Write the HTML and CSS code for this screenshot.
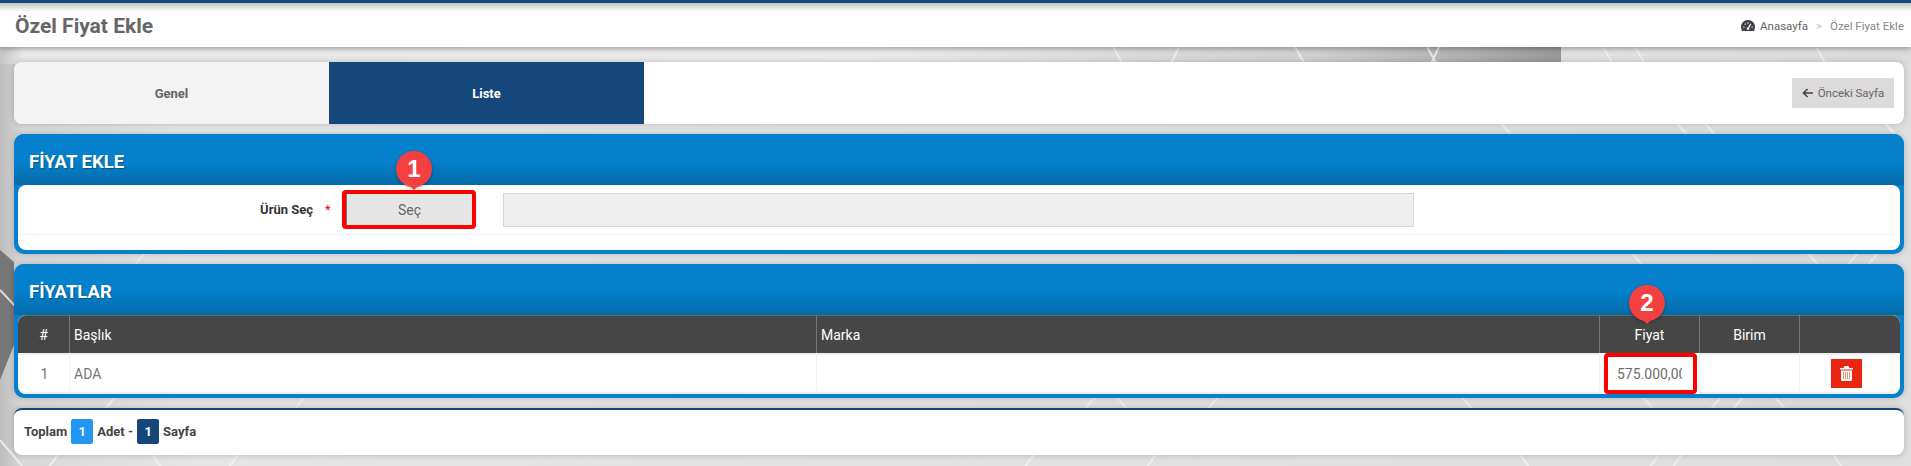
FILE: index.html
```html
<!DOCTYPE html>
<html lang="en">
<head>
  <meta charset="UTF-8">
  <meta name="viewport" content="width=device-width, initial-scale=1.0">
  <title>Özel Fiyat Ekle</title>
  <link rel="stylesheet" href="styles.css">
</head>
<body>
  <header class="topbar">
    <h1 class="page-title">Özel Fiyat Ekle</h1>
    <div class="breadcrumb">
      <svg class="gauge-icon" viewBox="0 0 14 11" width="14" height="11">
        <path fill="#3f3f46" d="M7 0C3.1 0 0 3.1 0 7c0 1.5.4 2.8 1.2 4h11.6c.8-1.200 1.200-2.500 1.200-4 0-3.900-3.100-7-7-7z"/>
        <path fill="none" stroke="#fff" stroke-width="1.300" d="M2.300 7.200h1.200M3.800 3.700l.8.8M7 2.200v1.200M11.700 7.200h-1.200M7 8.800 9.700 3.800"/>
        <circle cx="7" cy="8.800" r="1.300" fill="#fff"/>
      </svg>
      <a class="crumb-home">Anasayfa</a>
      <span class="crumb-sep">&gt;</span>
      <span class="crumb-current">Özel Fiyat Ekle</span>
    </div>
  </header>

  <main class="content">
    <nav class="tabs">
      <a class="tab">Genel</a>
      <a class="tab tab-active">Liste</a>
      <button class="back-button">
        <svg viewBox="0 0 11 10" width="11" height="10"><path fill="none" stroke="#444" stroke-width="1.600" d="M5.500 1 1.500 5l4 4M1.500 5H11"/></svg>
        Önceki Sayfa
      </button>
    </nav>

    <section class="panel">
      <h2 class="panel-title">FİYAT EKLE</h2>
      <div class="panel-body form-body">
        <div class="form-row">
          <label class="form-label">Ürün Seç</label>
          <span class="required">*</span>
          <div class="mark-frame select-frame">
            <span class="callout callout-one">1</span>
            <button class="select-button">Seç</button>
          </div>
          <div class="product-input"></div>
        </div>
      </div>
    </section>

    <section class="panel">
      <h2 class="panel-title">FİYATLAR</h2>
      <div class="panel-body">
        <table class="price-table">
          <thead>
            <tr>
              <th class="col-num">#</th>
              <th class="col-title text-left">Başlık</th>
              <th class="col-brand text-left">Marka</th>
              <th class="col-small">Fiyat</th>
              <th class="col-small">Birim</th>
              <th class="col-last"></th>
            </tr>
          </thead>
          <tbody>
            <tr>
              <td>1</td>
              <td class="text-left">ADA</td>
              <td></td>
              <td class="frame-cell">
                <div class="mark-frame price-frame">
                  <span class="callout callout-two">2</span>
                  <span class="price-value">575.000,00</span>
                </div>
              </td>
              <td></td>
              <td>
                <button class="delete-button">
                  <svg viewBox="0 0 13 15" width="13" height="15">
                    <path fill="#fff" d="M4.500 0h4l1 2H13v1.500H0V2h3.500z"/>
                    <path fill="#fff" d="M1 4.500h11V13.500c0 .8-.6 1.500-1.400 1.500H2.400C1.600 15 1 14.300 1 13.500z"/>
                    <path stroke="#e8935f" stroke-width="1" d="M3.500 6v7M5.500 6v7M7.500 6v7M9.500 6v7"/>
                  </svg>
                </button>
              </td>
            </tr>
          </tbody>
        </table>
      </div>
    </section>

    <footer class="summary">
      <span>Toplam</span>
      <span class="count count-total">1</span>
      <span>Adet -</span>
      <span class="count count-pages">1</span>
      <span>Sayfa</span>
    </footer>
  </main>
</body>
</html>
```

FILE: styles.css
```css
* {
  box-sizing: border-box;
}
html, body {
  height: 100%;
}
body {
  margin: 0;
  overflow: hidden;
  font-family: Roboto, "Liberation Sans", sans-serif;
  background-color: #e6e6e6;
  background-image: url("data:image/svg+xml,%3Csvg xmlns='http://www.w3.org/2000/svg' width='1911' height='466'%3E%3Cdefs%3E%3ClinearGradient id='a' x1='0' x2='1' y1='0' y2='0'%3E%3Cstop offset='0' stop-color='%23bdbdbd'/%3E%3Cstop offset='.012' stop-color='%23d8d8d8'/%3E%3Cstop offset='.1' stop-color='%23e6e6e6'/%3E%3Cstop offset='1' stop-color='%23dedede'/%3E%3C/linearGradient%3E%3ClinearGradient id='b' x1='0' x2='1' y1='0' y2='0'%3E%3Cstop offset='0' stop-color='%23c4c4c4'/%3E%3Cstop offset='.012' stop-color='%23e8e8e8'/%3E%3Cstop offset='.45' stop-color='%23ebebeb'/%3E%3Cstop offset='.68' stop-color='%23d2d2d2'/%3E%3Cstop offset='.75' stop-color='%23b8b8b8'/%3E%3Cstop offset='.817' stop-color='%23999'/%3E%3Cstop offset='.817' stop-color='%23e2e2e2'/%3E%3Cstop offset='1' stop-color='%23dcdcdc'/%3E%3C/linearGradient%3E%3C/defs%3E%3Crect width='1911' height='466' fill='url(%23a)'/%3E%3Crect y='40' width='1911' height='24' fill='url(%23b)'/%3E%3Cpolygon points='0,250 14,262 14,345 0,380' fill='%23777'/%3E%3Cg stroke='%23f4f4f4' stroke-width='2' opacity='.8'%3E%3Cpath d='M0 290 16 307M0 440 22 466M1112 45 1126 70M1180 45 1168 70M1294 45 1308 70M1426 45 1440 70M1440 45 1428 70M1602 45 1616 70M1634 45 1648 70M1815 45 1829 70M1500 122 1512 136M1676 122 1688 136M1704 122 1716 136M1884 122 1896 136M146 252 134 266M1631 252 1643 266M1807 252 1819 266M1859 252 1847 266M1879 252 1867 266M116 396 104 410M306 396 294 410M1096 396 1084 410M1116 396 1128 410M1219 396 1207 410M1461 396 1473 410M1642 396 1654 410M1722 396 1710 410M1744 396 1732 410M1774 396 1786 410M59 453 47 470M151 453 163 470M239 453 227 470M1035 453 1023 470M1157 453 1145 470M1519 453 1531 470M1660 453 1648 470M1683 453 1671 470M1832 453 1844 470'/%3E%3C/g%3E%3C/svg%3E");
  background-repeat: no-repeat;
}
.topbar {
  display: flex;
  align-items: center;
  justify-content: space-between;
  height: 47px;
  padding: 1px 7px 0 15px;
  background: linear-gradient(#c4c4c4, #fff 9px);
  border-top: 3px solid #16477a;
  box-shadow: 0 2px 5px rgba(0, 0, 0, 0.3);
}
.page-title {
  margin: 0;
  font-size: 21px;
  font-weight: 700;
  color: #666;
}
.breadcrumb {
  display: flex;
  align-items: center;
  font-size: 11.5px;
  color: #666;
}
.crumb-home {
  margin-left: 5px;
}
.crumb-sep {
  margin: 0 8px;
  color: #bbb;
}
.crumb-current {
  color: #888;
}
.content {
  display: flex;
  flex-direction: column;
  gap: 10px;
  padding: 15px 7px 0 14px;
}
.tabs {
  display: flex;
  align-items: center;
  height: 62px;
  background-color: #fff;
  border-radius: 8px;
  overflow: hidden;
  box-shadow: 0 0 6px rgba(0, 0, 0, 0.2);
}
.tab {
  display: flex;
  align-items: center;
  justify-content: center;
  align-self: stretch;
  width: 315px;
  font-size: 13px;
  font-weight: 700;
  color: #666;
  background-color: #f3f3f3;
}
.tab-active {
  color: #fff;
  background-color: #16477a;
}
.back-button {
  display: flex;
  align-items: center;
  justify-content: center;
  gap: 5px;
  width: 102px;
  height: 30px;
  margin-left: auto;
  margin-right: 10px;
  padding: 0;
  border: none;
  font-family: inherit;
  font-size: 11.5px;
  color: #666;
  background-color: #dcdadb;
}
.panel {
  padding: 0 4px 4px;
  background-color: #0480cc;
  border-radius: 10px;
  box-shadow: 0 0 6px rgba(0, 0, 0, 0.2);
}
.panel-title {
  display: flex;
  align-items: center;
  height: 51px;
  margin: 0 -4px;
  padding: 4px 15px 0;
  font-size: 18.5px;
  font-weight: 700;
  color: #fff;
  text-shadow: 1px 1px 1px rgba(0, 0, 0, 0.3);
  background: linear-gradient(#0480cc 55%, #046aa8);
  border-radius: 10px 10px 0 0;
}
.panel-body {
  background-color: #fff;
  border-radius: 8px;
}
.form-body {
  padding-bottom: 15px;
}
.form-row {
  display: flex;
  align-items: center;
  height: 50px;
  border-bottom: 1px solid #f2f2f2;
}
.form-label {
  width: 295px;
  font-size: 13px;
  font-weight: 700;
  text-align: right;
  color: #333;
}
.required {
  width: 6px;
  margin: 0 11px 0 12px;
  font-size: 13px;
  color: #e00;
}
.mark-frame {
  position: relative;
  border: 4px solid #f00;
  border-radius: 4px;
}
.select-frame {
  width: 134px;
  height: 39px;
}
.select-button {
  display: block;
  width: 100%;
  height: 100%;
  border: none;
  border-left: 1px solid #777;
  font-family: inherit;
  font-size: 14px;
  color: #666;
  background-color: #e6e6e6;
}
.product-input {
  width: 911px;
  height: 34px;
  margin-left: 27px;
  background-color: #eee;
  border: 1px solid #d6d6de;
}
.callout {
  position: absolute;
  z-index: 2;
  display: flex;
  align-items: center;
  justify-content: center;
  width: 36px;
  height: 36px;
  font-family: "Liberation Sans", sans-serif;
  font-size: 24px;
  font-weight: 700;
  color: #fff;
  background-color: #f44040;
  border-radius: 50%;
  box-shadow: 0 1px 3px rgba(0, 0, 0, 0.35);
}
.callout::after {
  content: "";
  position: absolute;
  left: 13px;
  bottom: -3px;
  border-top: 5px solid #f44040;
  border-left: 5px solid transparent;
  border-right: 5px solid transparent;
}
.callout-one {
  top: -43px;
  left: 50px;
}
.callout-two {
  top: -72px;
  left: 21px;
}
.price-table {
  width: 100%;
  border-collapse: separate;
  border-spacing: 0;
  table-layout: fixed;
  font-size: 14px;
}
.price-table th {
  height: 38px;
  padding: 0 4px;
  font-weight: 400;
  color: #fff;
  background-color: #464646;
  border-left: 1px solid #777;
  border-top: 1px solid #666;
}
.price-table th:first-child {
  border-left: none;
  border-top-left-radius: 8px;
}
.price-table th:last-child {
  border-top-right-radius: 8px;
}
.col-num {
  width: 51px;
}
.col-title {
  width: 747px;
}
.col-brand {
  width: 783px;
}
.col-small {
  width: 100px;
}
.col-last {
  width: 101px;
}
.text-left {
  text-align: left;
}
.price-table td {
  height: 41px;
  padding: 0 4px;
  text-align: center;
  color: #777;
  border-top: 2px solid #eee;
  border-bottom: 2px solid #eee;
  border-left: 1px solid #f3f3f3;
}
.price-table td:first-child {
  padding-left: 6px;
  border-left: none;
  border-bottom-left-radius: 8px;
}
.price-table td:last-child {
  padding-right: 12px;
  border-bottom-right-radius: 8px;
}
.price-table td.text-left {
  text-align: left;
}
.price-table td.frame-cell {
  padding: 0 5px 0 4px;
  border-top: none;
  border-bottom: none;
}
.price-frame {
  display: flex;
  align-items: center;
  width: 93px;
  height: 41px;
  padding-left: 9px;
  background-color: #fff;
}
.price-value {
  display: block;
  width: 65px;
  overflow: hidden;
  white-space: nowrap;
  font-size: 14px;
  color: #6e6e6e;
}
.delete-button {
  display: inline-flex;
  align-items: center;
  justify-content: center;
  width: 31px;
  height: 29px;
  padding: 0;
  vertical-align: middle;
  border: none;
  background-color: #ea2512;
}
.summary {
  display: flex;
  align-items: center;
  gap: 4px;
  height: 47px;
  padding: 0 10px 2px;
  font-size: 13px;
  font-weight: 700;
  color: #444;
  background-color: #fff;
  border-top: 2px solid #16477a;
  border-radius: 8px;
  box-shadow: 0 0 6px rgba(0, 0, 0, 0.2);
}
.count {
  display: flex;
  align-items: center;
  justify-content: center;
  width: 22px;
  height: 25px;
  color: #fff;
  border-radius: 2px;
}
.count-total {
  background-color: #2196f3;
}
.count-pages {
  background-color: #16477a;
}
```
